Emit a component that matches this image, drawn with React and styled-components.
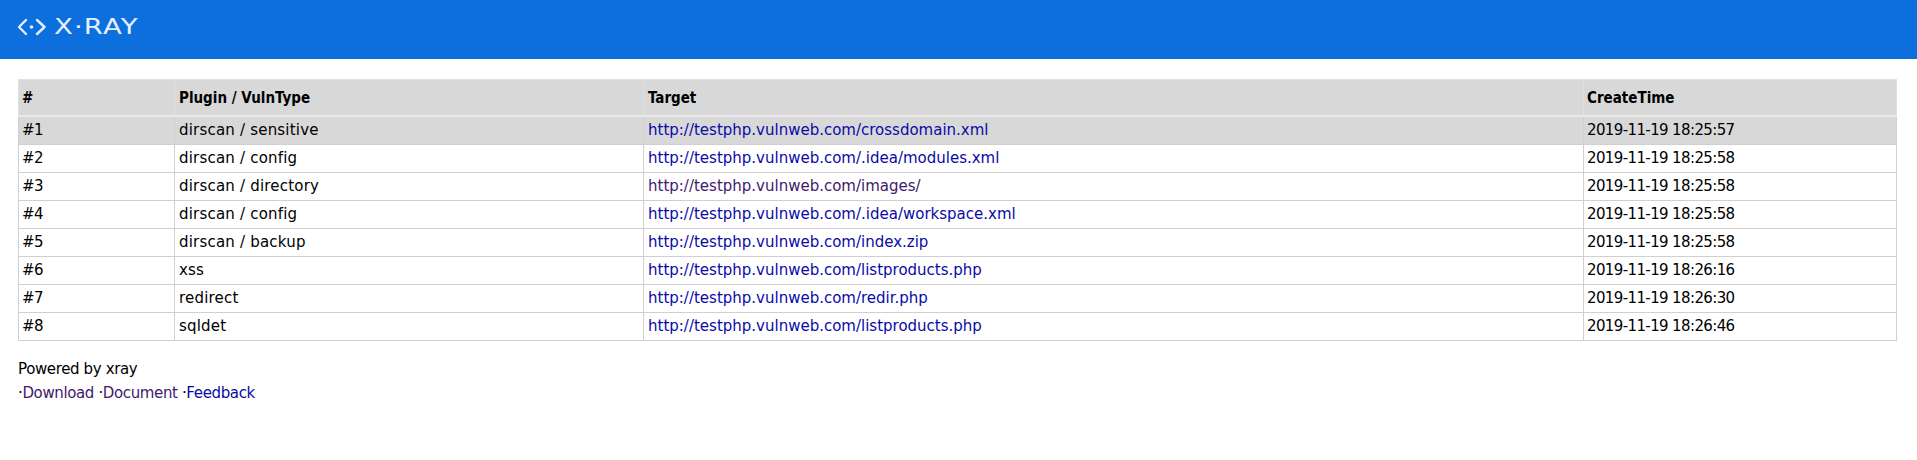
import React from "react";
import styled, { createGlobalStyle } from "styled-components";

const GlobalStyle = createGlobalStyle`
  html, body {
    margin: 0;
    background: #fff;
    font-family: "DejaVu Sans", Verdana, sans-serif;
    font-size: 15px;
    color: #000;
  }
`;

const rows = [
  ["dirscan / sensitive", "http://testphp.vulnweb.com/crossdomain.xml", "2019-11-19 18:25:57"],
  ["dirscan / config", "http://testphp.vulnweb.com/.idea/modules.xml", "2019-11-19 18:25:58"],
  ["dirscan / directory", "http://testphp.vulnweb.com/images/", "2019-11-19 18:25:58", true],
  ["dirscan / config", "http://testphp.vulnweb.com/.idea/workspace.xml", "2019-11-19 18:25:58"],
  ["dirscan / backup", "http://testphp.vulnweb.com/index.zip", "2019-11-19 18:25:58"],
  ["xss", "http://testphp.vulnweb.com/listproducts.php", "2019-11-19 18:26:16"],
  ["redirect", "http://testphp.vulnweb.com/redir.php", "2019-11-19 18:26:30"],
  ["sqldet", "http://testphp.vulnweb.com/listproducts.php", "2019-11-19 18:26:46"],
];

const LogoMark = () => (
  <svg width="30" height="20" viewBox="0 0 30 20" fill="none" stroke="#e4f0fb" strokeWidth="2.4" strokeLinecap="round" strokeLinejoin="round">
    <path d="M9 3 L2 10 L9 17" />
    <path d="M20 3 L27.5 10 L20 17" />
    <circle cx="14.5" cy="10" r="1.8" fill="#e4f0fb" stroke="none" />
  </svg>
);

const App = () => (
  <>
    <GlobalStyle />
    <Header>
      <LogoMark />
      <LogoText>X·RAY</LogoText>
    </Header>
    <Page>
      <Table>
        <colgroup>
          <col width="156" />
          <col width="469" />
          <col width="940" />
          <col />
        </colgroup>
        <thead>
          <tr>
            <Th $tight>#</Th>
            <Th>Plugin / VulnType</Th>
            <Th>Target</Th>
            <Th $tight>CreateTime</Th>
          </tr>
        </thead>
        <tbody>
          {rows.map((row, i) => (
            <Row key={i} $active={i === 0}>
              <NumberCell>#{i + 1}</NumberCell>
              <PluginCell>{row[0]}</PluginCell>
              <Td>
                <Link href="#" $visited={row[3]}>{row[1]}</Link>
              </Td>
              <NumberCell>{row[2]}</NumberCell>
            </Row>
          ))}
        </tbody>
      </Table>
      <Footer>
        <div>Powered by xray</div>
        <div>
          ·<Link href="#" $visited>Download</Link> ·<Link href="#" $visited>Document</Link> ·<Link href="#">Feedback</Link>
        </div>
      </Footer>
    </Page>
  </>
);

const Header = styled.header`
  height: 59px;
  background: #0c6fdd;
  display: flex;
  align-items: center;
  gap: 7px;
  padding: 0 0 6px 17px;
  box-sizing: border-box;
`;

const LogoText = styled.span`
  display: inline-block;
  font-size: 22px;
  letter-spacing: 0.9px;
  color: #e4f0fb;
  transform: scaleX(1.25);
  transform-origin: left center;
`;

const Page = styled.main`
  padding: 20px 20px 0 18px;
`;

const Table = styled.table`
  width: 100%;
  table-layout: fixed;
  border-collapse: collapse;
`;

const Th = styled.th`
  height: 36px;
  padding: 2px 4px 0 ${(p) => (p.$tight ? "3px" : "4px")};
  box-sizing: border-box;
  text-align: left;
  font-family: "DejaVu Sans Condensed", "DejaVu Sans", sans-serif;
  font-weight: bold;
  background: #d8d8d8;
  border: 1px solid #e0e0e0;
  border-bottom: 2px solid #e8e8e8;
`;

const Row = styled.tr`
  background: ${(p) => (p.$active ? "#d8d8d8" : "#fff")};
`;

const Td = styled.td`
  height: 27px;
  padding: 0 4px;
  border: 1px solid #d0d0d0;
  border-top: none;
  white-space: nowrap;
`;

const NumberCell = styled(Td)`
  padding-left: 3px;
  letter-spacing: -0.62px;
`;

const PluginCell = styled(Td)`
  letter-spacing: 0.2px;
`;

const Link = styled.a`
  color: ${(p) => (p.$visited ? "#3f1a6e" : "#0a0aa8")};
  text-decoration: none;
`;

const Footer = styled.footer`
  margin-top: 16px;
  line-height: 24px;
  letter-spacing: -0.37px;
`;

export default App;
